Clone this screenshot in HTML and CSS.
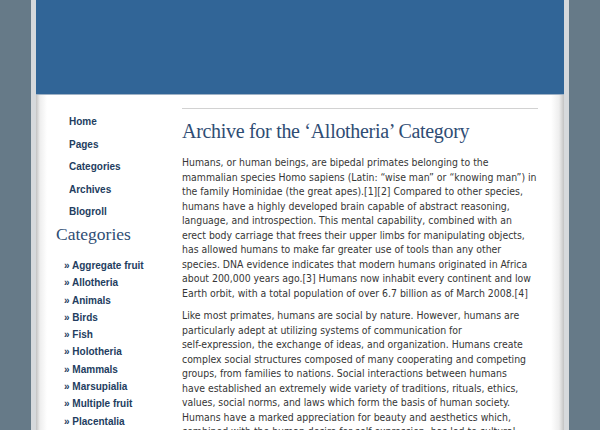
FILE: index.html
```html
<!DOCTYPE html>
<html>
<head>
<meta charset="utf-8">
<title>Archive for the ‘Allotheria’ Category</title>
<link rel="stylesheet" href="styles.css">
</head>
<body>
<div class="page">
  <div class="header"></div>
  <div class="content">
    <div class="sidebar">
      <ul class="nav">
        <li><a href="#">Home</a></li>
        <li><a href="#">Pages</a></li>
        <li><a href="#">Categories</a></li>
        <li><a href="#">Archives</a></li>
        <li><a href="#">Blogroll</a></li>
      </ul>
      <h2 class="side-title">Categories</h2>
      <ul class="cats">
        <li>» <a href="#">Aggregate fruit</a></li>
        <li>» <a href="#">Allotheria</a></li>
        <li>» <a href="#">Animals</a></li>
        <li>» <a href="#">Birds</a></li>
        <li>» <a href="#">Fish</a></li>
        <li>» <a href="#">Holotheria</a></li>
        <li>» <a href="#">Mammals</a></li>
        <li>» <a href="#">Marsupialia</a></li>
        <li>» <a href="#">Multiple fruit</a></li>
        <li>» <a href="#">Placentalia</a></li>
      </ul>
    </div>
    <div class="main">
      <hr class="rule">
      <h1 class="title">Archive for the ‘Allotheria’ Category</h1>
      <p>Humans, or human beings, are bipedal primates belonging to the<br>
mammalian species Homo sapiens (Latin: “wise man” or “knowing man”) in<br>
the family Hominidae (the great apes).[1][2] Compared to other species,<br>
humans have a highly developed brain capable of abstract reasoning,<br>
language, and introspection. This mental capability, combined with an<br>
erect body carriage that frees their upper limbs for manipulating objects,<br>
has allowed humans to make far greater use of tools than any other<br>
species. DNA evidence indicates that modern humans originated in Africa<br>
about 200,000 years ago.[3] Humans now inhabit every continent and low<br>
Earth orbit, with a total population of over 6.7 billion as of March 2008.[4]</p>
      <p>Like most primates, humans are social by nature. However, humans are<br>
particularly adept at utilizing systems of communication for<br>
self-expression, the exchange of ideas, and organization. Humans create<br>
complex social structures composed of many cooperating and competing<br>
groups, from families to nations. Social interactions between humans<br>
have established an extremely wide variety of traditions, rituals, ethics,<br>
values, social norms, and laws which form the basis of human society.<br>
Humans have a marked appreciation for beauty and aesthetics which,<br>
combined with the human desire for self-expression, has led to cultural<br>
innovations such as art, literature and music.</p>
    </div>
  </div>
</div>
</body>
</html>
```

FILE: styles.css
```css
html, body {
  margin: 0;
  padding: 0;
}
body {
  background: #667a88;
  overflow: hidden;
}
.page {
  width: 528px;
  margin: 0 auto;
  border-left: 5px solid #d6d9dc;
  border-right: 5px solid #d6d9dc;
  min-height: 430px;
  background: #fff;
}
.header {
  height: 94px;
  background: #316597;
  border-bottom: 1px solid #9fb2c6;
}
.content {
  display: flex;
  min-height: 400px;
  background: linear-gradient(to right, #c2c2c2 0, #eeeeee 4px, #ffffff 11px, #ffffff calc(100% - 13px), #eeeeee calc(100% - 5px), #c2c2c2 100%);
}
.sidebar {
  width: 126px;
  padding-left: 20px;
  flex: none;
}
.nav {
  list-style: none;
  margin: 0;
  padding: 16px 0 0 13px;
}
.nav li {
  font-family: "Liberation Sans", Arial, sans-serif;
  font-weight: bold;
  font-size: 10px;
  line-height: 22.5px;
}
.nav a, .cats a {
  color: #233d60;
  text-decoration: none;
}
.side-title {
  margin: 0;
  font-family: "Liberation Serif", "Times New Roman", serif;
  font-weight: normal;
  font-size: 17.5px;
  line-height: 21px;
  color: #2f4d74;
}
.cats {
  list-style: none;
  margin: 12.5px 0 0;
  padding: 0 0 0 8px;
}
.cats li {
  line-height: 17.3px;
  font-family: "Liberation Sans", Arial, sans-serif;
  font-weight: bold;
  font-size: 10px;
  color: #233d60;
}
.main {
  width: 356px;
  flex: none;
}
.rule {
  margin: 13px 0 0;
  border: 0;
  border-top: 1px solid #d2d2d2;
  height: 0;
}
.title {
  margin: 10px 0 0;
  font-family: "Liberation Serif", "Times New Roman", serif;
  font-weight: normal;
  font-size: 20px;
  letter-spacing: -0.3px;
  line-height: 24px;
  color: #2f4d74;
}
.main p {
  margin: 12px 0 0;
  font-family: "DejaVu Sans Condensed", "DejaVu Sans", sans-serif;
  font-size: 10.4px;
  line-height: 14.55px;
  color: #363636;
  white-space: nowrap;
}
.main p + p {
  margin-top: 7.5px;
}
```
